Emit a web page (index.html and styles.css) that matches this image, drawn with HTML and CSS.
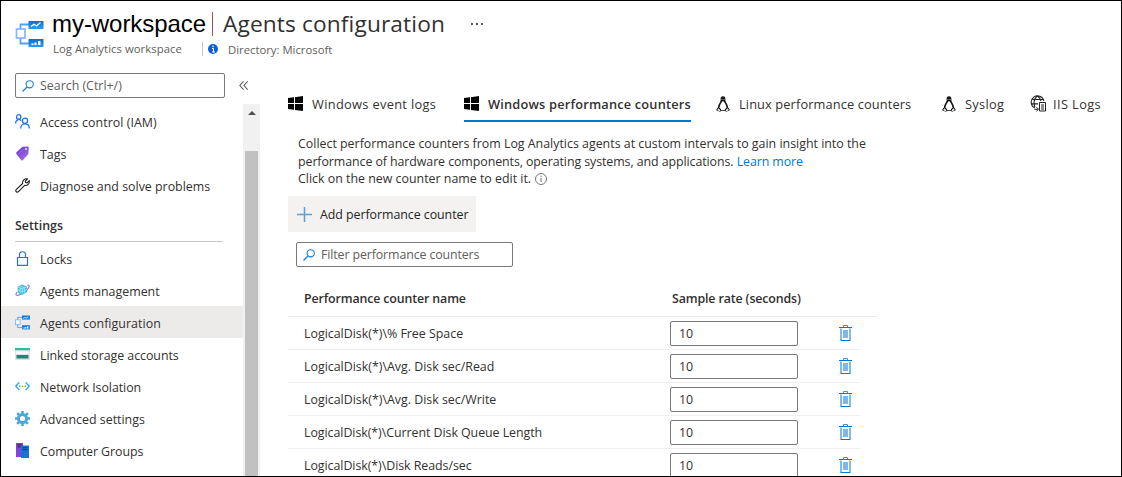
FILE: index.html
```html
<!DOCTYPE html>
<html lang="en">
<head>
<meta charset="utf-8">
<title>my-workspace | Agents configuration</title>
<link rel="stylesheet" href="styles.css">
</head>
<body>
<svg class="defs" aria-hidden="true">
  <defs>
    <linearGradient id="blue" x1="0" y1="0" x2="0" y2="1"><stop offset="0" stop-color="#0f6cc9"/><stop offset="1" stop-color="#2f9cf0"/></linearGradient>
    <linearGradient id="purple" x1="0" y1="0" x2="1" y2="1"><stop offset="0" stop-color="#6a2bd0"/><stop offset="1" stop-color="#a67ee0"/></linearGradient>
  </defs>
  <symbol id="i-config" viewBox="0 0 28 28">
    <path d="M5 9.500V4.500H14M5 17.500V23.500H14" fill="none" stroke="#5c9df5" stroke-width="1.800"/>
    <rect x="1" y="9" width="8.500" height="9" fill="#fff" stroke="#86b5fb" stroke-width="1.700"/>
    <rect x="13" y="1" width="15" height="8" rx=".5" fill="url(#blue)"/>
    <rect x="13" y="19" width="15" height="8" rx=".5" fill="url(#blue)"/>
    <path d="M15.500 6.500l3-2.300 2.500 1.800 4-3.500" fill="none" stroke="#fff" stroke-width="1.200"/>
    <path d="M16 25v-1.500h2V25zM19 25v-2.500h2V25zM22.500 25v-4h2.500v4z" fill="#fff"/>
  </symbol>
  <symbol id="i-search" viewBox="0 0 12 12">
    <circle cx="7.700" cy="4.300" r="3.600" fill="none" stroke="#1a80d8" stroke-width="1.100"/>
    <path d="M5 7L.5 11.500" stroke="#1a80d8" stroke-width="1.200"/>
  </symbol>
  <symbol id="i-windows" viewBox="0 0 15 15">
    <path d="M0 2.100L6 1.300V7H0zM7 1.200L15 0v7H7zM0 8h6v5.700L0 12.900zM7 8h8v7l-8-1.100z"/>
  </symbol>
  <symbol id="i-linux" viewBox="0 0 14 16">
    <path d="M7 .3C5.300.3 4.500 1.500 4.600 3.200 4.700 5 4.400 5.600 3.500 7 2.500 8.600 2 9.800 1.900 11.500L.6 13.100c-.5.800-.1 1.800.8 2l2.200.5c.8.1 1.400-.2 1.800-.8h3.200c.4.600 1 .9 1.800.8l2.200-.5c.9-.2 1.300-1.200.8-2l-1.300-1.600C12 9.800 11.500 8.600 10.500 7c-.9-1.400-1.200-2-1.100-3.800C9.500 1.500 8.700.3 7 .3z" fill="#151515"/>
    <path d="M7 5.100C5.700 6.200 3.700 9 3.600 11.300L5.400 13.900h3.200l1.800-2.600C10.300 9 8.300 6.200 7 5.100z" fill="#fff"/>
    <path d="M1.400 13.700l1.300-1.500 1.700 2.200-.9.500-2-.5zM12.600 13.700l-1.300-1.500-1.700 2.200.9.500 2-.5z" fill="#f2f2f2"/>
    <path d="M5.500 3h1v1h-1zM7.500 3h1v1h-1z" fill="#aaa"/>
  </symbol>
  <symbol id="i-iis" viewBox="0 0 17 17">
    <path d="M13.900 6A6.400 6.400 0 1 0 4.800 13M7.500 1C4 3.500 3.600 8 4.800 12M7.700 1C10 3 10.700 4.500 10.900 6M2 4.500h11.300M1.200 8.900H8" fill="none" stroke="#222" stroke-width="1.100"/>
    <path d="M9.500 7.500h6v8.500h-6zM11 10h3M11 12h3M11 14h3" fill="#fff" stroke="#222"/>
    <path d="M4.500 14.300h3.700M6.400 12.200l2.100 2.100-2.100 2" fill="none" stroke="#222"/>
  </symbol>
  <symbol id="i-trash" viewBox="0 0 13 16">
    <path d="M2 3.500V15M11 3.500V15" stroke="#7fbcec" stroke-width="2"/>
    <path d="M4.500 2V.5h4V2" fill="none" stroke="#3c96de" stroke-width="1"/>
    <path d="M0 2.500h13M1.500 15.500h10" stroke="#0078d4"/>
    <path d="M4 5h5v8H4z" fill="#7db8e8"/>
  </symbol>
</svg>

<div class="frame">
  <header class="top">
    <svg class="top-icon"><use href="#i-config"/></svg>
    <div>
      <div class="title"><span class="ws">my-workspace</span><span class="bar"></span><h1>Agents configuration</h1><span class="more"><i></i><i></i><i></i></span></div>
      <div class="sub"><span class="kind">Log Analytics workspace</span>
        <svg class="info" viewBox="0 0 10 10"><circle cx="5" cy="5" r="5" fill="#0b5fdc"/><path d="M4 4.500h1.500V8M4 8h3" fill="none" stroke="#fff"/><circle cx="5" cy="2.400" r=".8" fill="#fff"/></svg>
        <span class="dir">Directory: Microsoft</span></div>
    </div>
  </header>

  <div class="body">
    <aside class="side">
      <div class="side-search">
        <div class="box"><svg class="glass"><use href="#i-search"/></svg><span>Search (Ctrl+/)</span></div>
        <svg class="collapse" viewBox="0 0 8 8"><path d="M4 .3L.7 4 4 7.700M7.700.3L4.400 4l3.300 3.700" fill="none" stroke="#555" stroke-width=".9"/></svg>
      </div>
      <div class="side-scroll">
        <nav class="menu">
          <a class="item"><svg viewBox="0 0 15 15"><g fill="none" stroke="#2374e1" stroke-width="1.300"><circle cx="3.700" cy="2.900" r="2.200"/><path d="M.6 9.500C.6 7 2 5.600 4 5.600c1 0 1.800.3 2.400.9"/><circle cx="10" cy="6.700" r="2.600"/><path d="M5.700 14.600c0-3 1.800-4.800 4.300-4.800s4.300 1.800 4.300 4.800"/></g></svg><span class="wide">Access control (IAM)</span></a>
          <a class="item"><svg viewBox="0 0 15 15"><path d="M1.300 6.500L7.500.8 12.500.6c.8 0 1.300.5 1.300 1.300L13.400 8 7.700 14.300c-.4.400-.9.400-1.300 0L1.300 8z" fill="url(#purple)"/><circle cx="11" cy="3" r="1" fill="#e5d7fa"/><path d="M8 3.500L3.500 8" stroke="#9d72e4"/></svg><span>Tags</span></a>
          <a class="item"><svg viewBox="0 0 15 15"><path d="M7.600 5.500C7.200 2.600 9.500.3 12.500.9L10.300 3.200l.4 1.300 1.400.4 2.100-2.300C15 5.600 12.500 8 9.600 7.400L3.300 13.800c-1.500 1-3.200-.5-2.200-2.100z" fill="none" stroke="#222" stroke-width="1.100" stroke-linejoin="round"/></svg><span>Diagnose and solve problems</span></a>
          <div class="group"><span>Settings</span></div>
          <a class="item"><svg viewBox="0 0 15 15"><path d="M2.500 6.500h10v7.900h-10zM4.500 6.500V3.600C4.500-.2 10.500-.2 10.500 3.600v2.900" fill="none" stroke="#2a6fdb" stroke-width="1.200"/></svg><span>Locks</span></a>
          <a class="item"><svg viewBox="0 0 15 15"><path d="M2 9C-1.500 14 4.500 12.600 9 9.500S16 1.500 12.500 2.300" fill="none" stroke="#9b78dc" stroke-width="1.200"/><path d="M2.500 4l4.500-2.400 4.800 2 .3 5.500-4.800 3-4.500-2.300z" fill="#3bbbe0"/><path d="M2.800 4.200l4.500 1.500 4.200-1.900M7.300 5.700v5.600M3 7l4.300 1.500 4.300-2M5.200 3.300l4.200 1.500v5M5.200 5v5" fill="none" stroke="#b8f1fa" stroke-width=".7"/></svg><span>Agents management</span></a>
          <a class="item active"><svg><use href="#i-config"/></svg><span class="wide">Agents configuration</span></a>
          <a class="item"><svg viewBox="0 0 15 15"><path d="M0 1h15v2.500H0z" fill="#35b99e"/><path d="M0 3.500h15V13H0z" fill="#dde5e4"/><path d="M1.500 4.500h12v2.500h-12z" fill="#fff"/><path d="M1.500 8h12v3.500h-12z" fill="#168b7e"/></svg><span class="tight">Linked storage accounts</span></a>
          <a class="item"><svg viewBox="0 0 15 15"><path d="M4.300 3.400L.8 7.200l3.500 3.900M10.700 3.400l3.500 3.800-3.500 3.900" fill="none" stroke="#2ba8e3" stroke-width="1.400"/><path d="M4 6.500h1.500V8H4zM6.700 6.500h1.500V8H6.700zM9.400 6.500h1.500V8H9.400z" fill="#82bd20"/></svg><span class="tight">Network Isolation</span></a>
          <a class="item"><svg viewBox="0 0 15 15"><circle cx="7.500" cy="7.500" r="4.100" fill="none" stroke="#4aa9d8" stroke-width="3"/><path d="M7.500 0v3M7.500 12v3M0 7.500h3M12 7.500h3M2.200 2.200l2 2M10.800 10.800l2 2M2.200 12.800l2-2M10.800 4.200l2-2" stroke="#4aa9d8" stroke-width="2.600"/></svg><span>Advanced settings</span></a>
          <a class="item"><svg viewBox="0 0 15 15"><path d="M1 0h7v14H1z" fill="#8146d8"/><path d="M2.300 1.800h4.500M2.300 3.800h4.500" stroke="#371b85"/><path d="M6 2.500h8V15H6z" fill="#1473d4"/><path d="M7.500 4.700h5M7.500 6.700h5" stroke="#083c85"/></svg><span class="tight">Computer Groups</span></a>
        </nav>
        <div class="track"><span class="arrow"></span><span class="thumb"></span></div>
      </div>
    </aside>

    <main class="main">
      <div class="tabs">
        <a class="tab events"><svg><use href="#i-windows"/></svg><span>Windows event logs</span></a>
        <a class="tab perf on"><svg><use href="#i-windows"/></svg><span>Windows performance counters</span></a>
        <a class="tab linux"><svg><use href="#i-linux"/></svg><span>Linux performance counters</span></a>
        <a class="tab syslog"><svg><use href="#i-linux"/></svg><span>Syslog</span></a>
        <a class="tab iis"><svg><use href="#i-iis"/></svg><span>IIS Logs</span></a>
      </div>
      <div class="desc">
        <div>Collect performance counters from Log Analytics agents at custom intervals to gain insight into the</div>
        <div class="d2">performance of hardware components, operating systems, and applications. <a>Learn more</a></div>
        <div class="d3">Click on the new counter name to edit it. <svg viewBox="0 0 12 12"><circle cx="6" cy="6" r="5.500" fill="none" stroke="#666" stroke-width=".9"/><path d="M6 5v4M6 2.800v1.100" stroke="#666"/></svg></div>
      </div>
      <button class="add"><svg viewBox="0 0 15 15"><path d="M7.500 0v15M0 7.500h15" stroke="#5a9fd6" stroke-width="1.500"/></svg><span>Add performance counter</span></button>
      <div class="box filter"><svg class="glass"><use href="#i-search"/></svg><span>Filter performance counters</span></div>
      <div class="thead"><span class="col-name">Performance counter name</span><span class="col-rate">Sample rate (seconds)</span></div>
      <div class="row"><span class="name">LogicalDisk(*)\% Free Space</span><span class="val">10</span><svg><use href="#i-trash"/></svg></div>
      <div class="row"><span class="name">LogicalDisk(*)\Avg. Disk sec/Read</span><span class="val">10</span><svg><use href="#i-trash"/></svg></div>
      <div class="row"><span class="name">LogicalDisk(*)\Avg. Disk sec/Write</span><span class="val">10</span><svg><use href="#i-trash"/></svg></div>
      <div class="row"><span class="name tight">LogicalDisk(*)\Current Disk Queue Length</span><span class="val">10</span><svg><use href="#i-trash"/></svg></div>
      <div class="row"><span class="name tight">LogicalDisk(*)\Disk Reads/sec</span><span class="val">10</span><svg><use href="#i-trash"/></svg></div>
    </main>
  </div>
</div>
</body>
</html>
```
FILE: styles.css
```css
* { box-sizing: border-box; }
body { margin: 0; background: #fff; color: #323130; font: 12.4px/17px "Open Sans", sans-serif; }
.defs { display: block; width: 0; height: 0; }
svg { display: block; flex: none; }
.frame { width: 1122px; height: 477px; border: 1px solid #000; overflow: hidden; }
.frame span, .frame h1, .desc div { white-space: nowrap; }
.wide { letter-spacing: .05px; }
.tight { letter-spacing: -.05px; }

.top { display: flex; height: 72px; padding: 7px 0 0 14px; }
.top-icon { width: 29px; height: 28px; margin: 12px 8px 0 0; }
.title { display: flex; align-items: center; height: 32px; }
.ws { font: 24px/32px "Liberation Sans", sans-serif; color: #000; letter-spacing: -.05px; width: 160px; }
.bar { width: 1px; height: 24px; background: #a05048; margin-right: 10px; }
h1 { margin: 0; font-size: 22.7px; line-height: 32px; font-weight: 400; width: 248px; letter-spacing: .13px; }
.more { display: flex; gap: 3px; }
.more i { width: 2px; height: 2px; background: #555; }
.sub { display: flex; align-items: center; height: 18px; color: #605e5c; font-size: 11.3px; }
.kind { width: 150px; margin-left: 1px; border-right: 1px solid #c8c6c4; line-height: 14px; letter-spacing: .05px; }
.info { width: 10px; height: 10px; margin: 0 10px 0 5px; }

.body { display: flex; height: 403px; }
.side { width: 259px; }
.side-search { display: flex; align-items: center; height: 25px; padding-left: 14px; }
.box { display: flex; align-items: center; height: 25px; border: 1px solid #7a7876; border-radius: 2px; color: #605e5c; padding-left: 6px; }
.side-search .box { width: 210px; }
.glass { width: 12px; height: 12px; margin-right: 6px; }
.collapse { width: 9px; height: 9px; margin-left: 14px; }
.side-scroll { display: flex; height: 378px; padding-top: 6px; }
.menu { width: 242px; padding-top: 1px; }
.item { display: flex; align-items: center; height: 32px; padding: 1px 0 0 14px; }
.item svg { width: 15px; height: 15px; margin-right: 10px; }
.item span { padding-top: 1px; }
.item.active { background: #edebe9; }
.group { height: 41px; width: 208px; margin-left: 14px; border-bottom: 1px solid #c8c6c4; font-weight: 600; line-height: 49px; }
.track { width: 17px; background: #f1f1f1; display: flex; flex-direction: column; align-items: center; height: 372px; }
.arrow { border: 4px solid transparent; border-top: 0; border-bottom-color: #505050; margin-top: 7px; }
.thumb { width: 13px; flex: 1; background: #c1c1c1; margin-top: 36px; }

.main { padding: 14px 0 0 28px; width: 861px; }
.tabs { display: flex; height: 35px; }
.tab { display: flex; height: 35px; align-items: center; padding-bottom: 2px; font-size: 12.8px; }
.tab svg { width: 15px; height: 15px; margin-right: 9px; }
.tab span { padding-top: 1px; }
.events { width: 176px; letter-spacing: .33px; }
.perf { width: 227px; margin-right: 25px; letter-spacing: .18px; }
.linux { width: 226px; letter-spacing: .12px; }
.syslog { width: 88px; letter-spacing: .3px; }
.linux svg, .syslog svg { width: 14px; height: 16px; }
.iis { letter-spacing: .4px; }
.iis svg { width: 17px; height: 17px; margin-right: 6px; }
.on { border-bottom: 2px solid #0078d4; padding-bottom: 0; font-weight: 600; }
.desc { padding: 13px 0 0 10px; line-height: 17.500px; height: 74px; }
.d2 { letter-spacing: -.08px; }
.desc a { color: #0078d4; }
.d3 { display: flex; align-items: center; }
.d3 svg { width: 12px; height: 12px; margin-left: 4px; }
.add { display: flex; align-items: center; width: 188px; height: 36px; border: 0; background: #f3f2f1; padding: 0 0 0 9px; font: inherit; color: #252423; letter-spacing: -.05px; }
.add svg { width: 15px; height: 15px; margin-right: 8px; }
.filter { width: 217px; margin: 10px 0 0 8px; letter-spacing: -.12px; }
.thead { display: flex; align-items: center; width: 589px; height: 50px; padding: 13px 0 0 16px; border-bottom: 1px solid #edebe9; font-weight: 600; letter-spacing: -.13px; }
.col-name { width: 368px; }
.row { display: flex; align-items: center; width: 572px; height: 33px; padding-left: 16px; border-bottom: 1px solid #f0efee; }
.name { width: 366px; }
.val { width: 128px; height: 25px; border: 1px solid #7a7876; border-radius: 2px; padding-left: 8px; line-height: 23px; margin-right: 41px; }
.row svg { width: 13px; height: 16px; }
```
